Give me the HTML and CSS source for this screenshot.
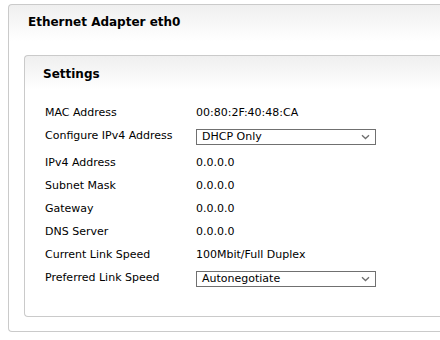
FILE: index.html
```html
<!DOCTYPE html>
<html>
<head>
<meta charset="utf-8">
<link rel="stylesheet" href="styles.css">
</head>
<body>
<div class="panel">
  <div class="panel-title">Ethernet Adapter eth0</div>
  <div class="group">
    <div class="group-title">Settings</div>
    <div class="form">
      <div class="label">MAC Address</div>
      <div class="value">00:80:2F:40:48:CA</div>

      <div class="label tall">Configure IPv4 Address</div>
      <div class="value tall">
        <div class="select"><span>DHCP Only</span>
          <svg class="chev" width="9" height="6" viewBox="0 0 9 6"><path d="M1 1.2 L4.5 4.5 L8 1.2" fill="none" stroke="#6e6e6e" stroke-width="1.3"/></svg>
        </div>
      </div>

      <div class="label">IPv4 Address</div>
      <div class="value">0.0.0.0</div>

      <div class="label">Subnet Mask</div>
      <div class="value">0.0.0.0</div>

      <div class="label">Gateway</div>
      <div class="value">0.0.0.0</div>

      <div class="label">DNS Server</div>
      <div class="value">0.0.0.0</div>

      <div class="label">Current Link Speed</div>
      <div class="value">100Mbit/Full Duplex</div>

      <div class="label tall">Preferred Link Speed</div>
      <div class="value tall">
        <div class="select"><span>Autonegotiate</span>
          <svg class="chev" width="9" height="6" viewBox="0 0 9 6"><path d="M1 1.2 L4.5 4.5 L8 1.2" fill="none" stroke="#6e6e6e" stroke-width="1.3"/></svg>
        </div>
      </div>
    </div>
  </div>
</div>
</body>
</html>
```
FILE: styles.css
```css
html, body {
  margin: 0;
  padding: 0;
  background: #fff;
  overflow: hidden;
}
body {
  font-family: "DejaVu Sans", Verdana, sans-serif;
  font-size: 11px;
  color: #000;
  padding: 4px 0 0 8px;
  width: 440px;
  height: 340px;
  box-sizing: border-box;
}
.panel {
  width: 432px;
  height: 328px;
  box-sizing: border-box;
  border: 1px solid #cacaca;
  border-right: 0;
  border-radius: 4px 0 0 4px;
  background: linear-gradient(to bottom, #efefef 0px, #ffffff 36px);
  padding: 9px 0 0 15px;
}
.panel-title {
  font-weight: bold;
  font-size: 12px;
  line-height: 16px;
  padding-left: 4px;
  margin-bottom: 25px;
}
.group {
  width: 416px;
  height: 262px;
  box-sizing: border-box;
  border: 1px solid #cacaca;
  border-right: 0;
  border-radius: 4px 0 0 4px;
  background: linear-gradient(to bottom, #efefef 0px, #ffffff 34px);
  padding: 10px 0 0 18px;
}
.group-title {
  font-weight: bold;
  font-size: 12px;
  line-height: 16px;
  margin-bottom: 19px;
}
.form {
  display: grid;
  grid-template-columns: 151px 180px;
  align-items: start;
  padding-left: 2px;
}
.label, .value {
  line-height: 23px;
  height: 23px;
  white-space: nowrap;
}
.tall {
  height: 27px;
  line-height: 23px;
}
.value.tall {
  padding-top: 5px;
  box-sizing: border-box;
}
.select {
  height: 16px;
  box-sizing: border-box;
  border: 1px solid #707070;
  background: #fff;
  display: flex;
  align-items: center;
  justify-content: space-between;
  padding: 0 5px 0 5px;
  line-height: 14px;
}
.chev {
  display: block;
}
```
